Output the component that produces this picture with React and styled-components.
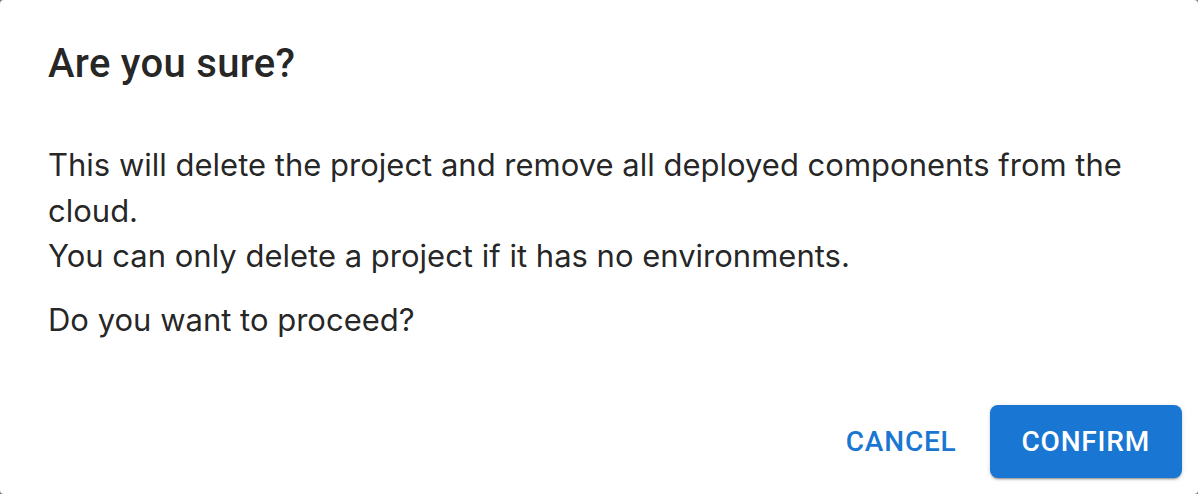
import React from "react";
import styled, { createGlobalStyle } from "styled-components";

const Global = createGlobalStyle`
  html, body { margin: 0; padding: 0; background: #7a7a7a; }
  #root { height: 494px; }
`;

const Dialog = styled.div`
  box-sizing: border-box;
  width: 1198px;
  height: 494px;
  background: #fff;
  border-radius: 4px;
  display: flex;
  flex-direction: column;
  overflow: hidden;
`;

const Title = styled.h2`
  margin: 0;
  padding: 32px 48px;
  font-family: Roboto, "Liberation Sans", sans-serif;
  font-weight: 500;
  font-size: 40px;
  line-height: 1.6;
  letter-spacing: 0.3px;
  color: rgba(0, 0, 0, 0.87);
`;

const Content = styled.div`
  padding: 14px 48px 0;
  flex: 1;
`;

const Text = styled.p`
  margin: 0 0 ${(p) => p.$gap || 0}px;
  font-family: Inter, "Open Sans", sans-serif;
  font-size: 31px;
  line-height: 45.7px;
  color: rgba(0, 0, 0, 0.87);
`;

const Actions = styled.div`
  display: flex;
  justify-content: flex-end;
  align-items: center;
  padding: 16px;
  gap: 17px;
`;

const Button = styled.button`
  border: 0;
  cursor: pointer;
  font-family: Roboto, "Liberation Sans", sans-serif;
  font-weight: 500;
  font-size: 28px;
  line-height: 1.75;
  letter-spacing: 0.8px;
  text-transform: uppercase;
  border-radius: 8px;
  padding: ${(p) => (p.$contained ? "12px 32px" : "12px 16px")};
  background: ${(p) => (p.$contained ? "#1976d2" : "transparent")};
  color: ${(p) => (p.$contained ? "#fff" : "#1976d2")};
  box-shadow: ${(p) =>
    p.$contained
      ? "0px 3px 1px -2px rgba(0,0,0,0.2), 0px 2px 2px 0px rgba(0,0,0,0.14), 0px 1px 5px 0px rgba(0,0,0,0.12)"
      : "none"};
`;

export default function App() {
  return (
    <>
      <Global />
      <Dialog>
        <Title>Are you sure?</Title>
        <Content>
          <Text $gap={18}>
            This will delete the project and remove all deployed components from the cloud.
            <br />
            You can only delete a project if it has no environments.
          </Text>
          <Text>Do you want to proceed?</Text>
        </Content>
        <Actions>
          <Button>Cancel</Button>
          <Button $contained>Confirm</Button>
        </Actions>
      </Dialog>
    </>
  );
}
